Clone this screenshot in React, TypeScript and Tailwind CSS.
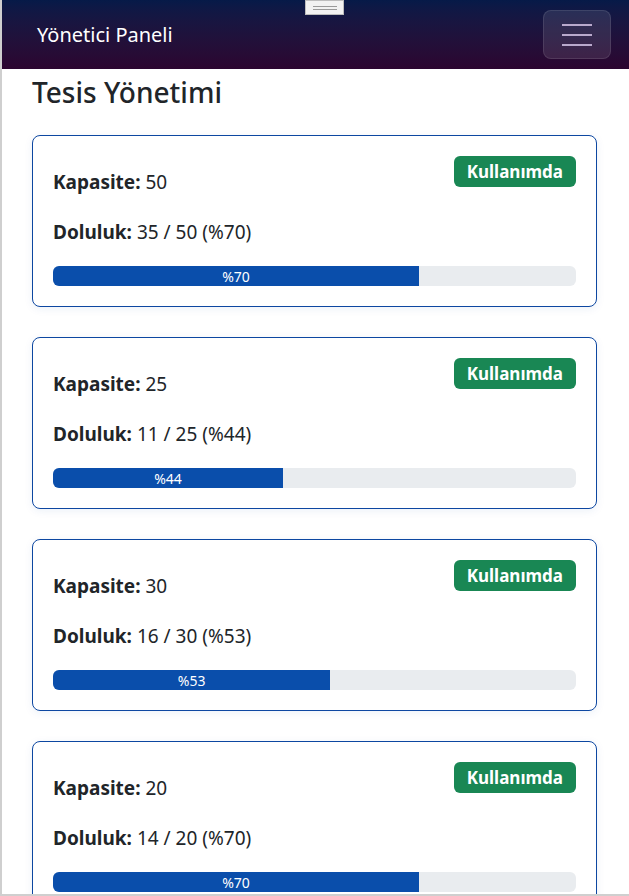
const FACILITIES = [
  { capacity: 50, used: 35 },
  { capacity: 25, used: 11 },
  { capacity: 30, used: 16 },
  { capacity: 20, used: 14 },
];

const FacilityCard = ({ capacity, used }: { capacity: number; used: number }) => {
  const pct = Math.round((used / capacity) * 100);
  return (
    <div className="rounded-lg border border-[#0d47a1] bg-white shadow-[0_2px_8px_rgba(13,71,161,0.08)] p-5">
      <div className="flex items-start justify-between">
        <p className="pt-[13px] text-[19px] leading-[27px] text-[#212529]">
          <span className="font-bold">Kapasite:</span> {capacity}
        </p>
        <span className="rounded-md bg-[#198754] px-[13px] h-[31px] flex items-center text-[17px] font-bold text-white">
          Kullanımda
        </span>
      </div>
      <p className="mt-[23px] text-[19px] leading-[27px] text-[#212529]">
        <span className="font-bold">Doluluk:</span> {used} / {capacity} (%{pct})
      </p>
      <div className="mt-5 h-5 rounded-md bg-[#e9ecef] overflow-hidden flex">
        <div
          className="h-full bg-[#0a4eab] flex items-center justify-center text-[14px] text-white"
          style={{ width: `${pct}%` }}
        >
          %{pct}
        </div>
      </div>
    </div>
  );
};

export default function App() {
  return (
    <div
      className="relative h-[896px] overflow-hidden border-l-2 border-b-2 border-[#cfcfcf] bg-white"
      style={{ fontFamily: '"Noto Sans", "Open Sans", sans-serif' }}
    >
      <nav className="h-[69px] bg-gradient-to-b from-[#061a48] to-[#2c0530] flex items-center justify-between pl-[35px] pr-[18px]">
        <span className="text-[20px] text-white">Yönetici Paneli</span>
        <button className="w-[68px] h-[49px] rounded-lg border border-white/10 bg-white/10 flex flex-col items-center justify-center gap-[8px]">
          <span className="block w-[30px] h-[2px] bg-[#b9a9cc]" />
          <span className="block w-[30px] h-[2px] bg-[#b9a9cc]" />
          <span className="block w-[30px] h-[2px] bg-[#b9a9cc]" />
        </button>
      </nav>

      <div className="absolute left-[303px] top-0 w-[39px] h-[15px] bg-[#f2f2f2] border border-[#bdbdbd] flex flex-col items-center justify-center gap-[2px]">
        <span className="block w-[24px] h-px bg-[#9a9a9a]" />
        <span className="block w-[24px] h-px bg-[#9a9a9a]" />
      </div>

      <main className="pl-[30px] pr-[32px]">
        <h1 className="mt-[3px] text-[28px] font-medium leading-[40px] text-[#212529]">Tesis Yönetimi</h1>
        <div className="mt-[23px] flex flex-col gap-[30px]">
          {FACILITIES.map((f, i) => (
            <FacilityCard key={i} capacity={f.capacity} used={f.used} />
          ))}
        </div>
      </main>
    </div>
  );
}
